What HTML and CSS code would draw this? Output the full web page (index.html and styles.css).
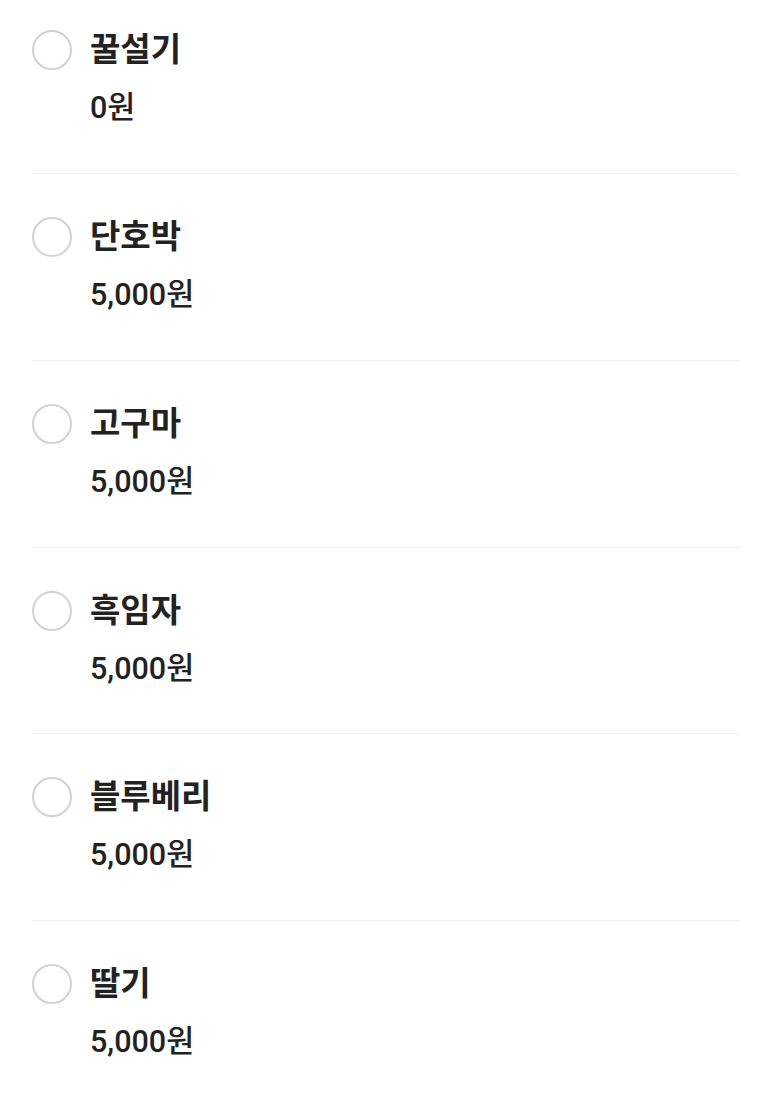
FILE: index.html
```html
<!DOCTYPE html>
<html lang="ko">
<head>
  <meta charset="UTF-8">
  <title>옵션 선택</title>
  <link rel="stylesheet" href="styles.css">
</head>
<body>
  <ul class="options">
    <li class="option">
      <label class="row"><span class="radio"></span><span class="name">꿀설기</span></label>
      <div class="price">0원</div>
    </li>
    <li class="option">
      <label class="row"><span class="radio"></span><span class="name">단호박</span></label>
      <div class="price">5,000원</div>
    </li>
    <li class="option">
      <label class="row"><span class="radio"></span><span class="name">고구마</span></label>
      <div class="price">5,000원</div>
    </li>
    <li class="option">
      <label class="row"><span class="radio"></span><span class="name">흑임자</span></label>
      <div class="price">5,000원</div>
    </li>
    <li class="option">
      <label class="row"><span class="radio"></span><span class="name">블루베리</span></label>
      <div class="price">5,000원</div>
    </li>
    <li class="option">
      <label class="row"><span class="radio"></span><span class="name">딸기</span></label>
      <div class="price">5,000원</div>
    </li>
  </ul>
</body>
</html>
```

FILE: styles.css
```css
body {
  margin: 0;
  background: #fff;
  font-family: Roboto, "Noto Sans CJK KR", sans-serif;
  color: #222;
}
.options {
  list-style: none;
  margin: 0;
  padding: 0 33px 0 32px;
}
.option {
  border-top: 1px solid #f0f0f0;
  padding: 43px 0 49px 0;
  height: 93.75px;
}
.option:first-child {
  border-top: none;
  padding-top: 30px;
  height: 94px;
}
.row {
  display: flex;
  align-items: center;
  gap: 18px;
  height: 40px;
}
.radio {
  box-sizing: border-box;
  width: 40px;
  height: 40px;
  border: 2px solid #d2d2d2;
  border-radius: 50%;
  flex: none;
}
.name {
  font-size: 33px;
  font-weight: 700;
  line-height: 40px;
}
.price {
  margin: 20px 0 0 58px;
  font-size: 30.5px;
  font-weight: 500;
  line-height: 36px;
}
```
